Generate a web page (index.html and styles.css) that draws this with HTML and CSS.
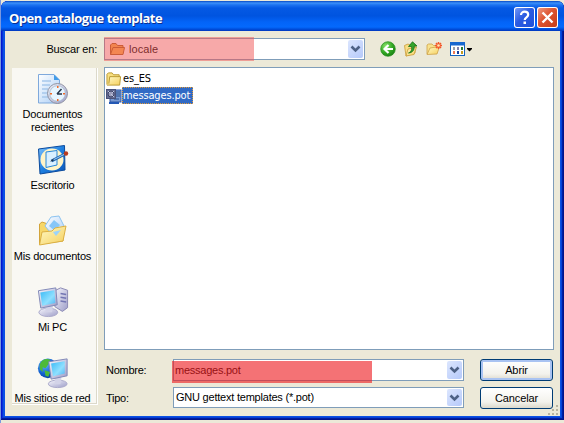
FILE: index.html
```html
<!DOCTYPE html>
<html lang="es">
<head>
<meta charset="utf-8">
<title>Open catalogue template</title>
<link rel="stylesheet" href="styles.css">
</head>
<body>
<svg class="defs" width="0" height="0">
  <defs>
    <linearGradient id="screen" x1="0" y1="0" x2="1" y2="1"><stop offset="0" stop-color="#39b9f5"/><stop offset=".6" stop-color="#8fe0ff"/><stop offset="1" stop-color="#4fb4f2"/></linearGradient>
    <linearGradient id="metal" x1="0" y1="0" x2="1" y2="1"><stop offset="0" stop-color="#f6f6fd"/><stop offset="1" stop-color="#9e9ec8"/></linearGradient>
    <linearGradient id="gold" x1="0" y1="0" x2="1" y2="1"><stop offset="0" stop-color="#fffac8"/><stop offset="1" stop-color="#f5cf5c"/></linearGradient>
    <linearGradient id="paper" x1="0" y1="0" x2="1" y2="1"><stop offset="0" stop-color="#ffffff"/><stop offset="1" stop-color="#a9cdf6"/></linearGradient>
    <linearGradient id="desk" x1="0" y1="0" x2="1" y2="1"><stop offset="0" stop-color="#7fc4ff"/><stop offset=".5" stop-color="#1e7fe0"/><stop offset="1" stop-color="#0c56b8"/></linearGradient>
    <radialGradient id="green" cx=".35" cy=".3" r=".8"><stop offset="0" stop-color="#8be36a"/><stop offset=".6" stop-color="#2fa421"/><stop offset="1" stop-color="#167a12"/></radialGradient>
    <radialGradient id="globe" cx=".35" cy=".3" r=".8"><stop offset="0" stop-color="#65b8ff"/><stop offset=".6" stop-color="#1260d0"/><stop offset="1" stop-color="#063a94"/></radialGradient>
  </defs>
</svg>
<div class="window">
  <header class="titlebar">
    <h1>Open catalogue template</h1>
    <button class="cap help" aria-label="Ayuda"><svg width="21" height="21"><path d="M7 8C7 3.500 14.200 3.800 14.200 7.800C14.200 10.300 10.700 10.300 10.700 13" fill="none" stroke="#fff" stroke-width="2.200"/><rect x="9.500" y="14.500" width="2.500" height="2.500" fill="#fff"/></svg></button>
    <button class="cap close" aria-label="Cerrar"><svg width="21" height="21"><path d="M5.500 5.500L15.500 15.500M15.500 5.500L5.500 15.500" stroke="#fff" stroke-width="2.400"/></svg></button>
  </header>
  <main class="body">
    <div class="toolbar">
      <label>Buscar en:</label>
      <div class="combo look">
        <svg class="folder" width="17" height="16" viewBox="0 0 17 16"><path d="M1.500 13.500V4L3 2.500H7L8.500 4.500H14V7" fill="#f2b44a" stroke="#a8651a"/><path d="M1.500 13.500L4 6.500H15.500L14 13.500Z" fill="#f7b850" stroke="#a8651a"/></svg>
        <span class="value">locale</span>
        <span class="drop"><svg width="15" height="18"><path d="M3.500 6.500L7.500 10.500L11.500 6.500" fill="none" stroke="#4d6185" stroke-width="2.600"/></svg></span>
        <i class="mark"></i>
      </div>
      <div class="tools">
        <svg width="16" height="16"><circle cx="8" cy="8" r="7.300" fill="url(#green)" stroke="#258d1d" stroke-width=".7"/><path d="M13 8H5M8.500 4L4.500 8L8.500 12" fill="none" stroke="#fff" stroke-width="2.200"/></svg>
        <svg width="16" height="16"><path d="M1.500 4.500L5 3L7 4L12 3V12L3 15Z" fill="#f9df85" stroke="#c99b38" stroke-width=".8"/><path d="M3 15L5 8L13.500 6L11 13.500Z" fill="url(#gold)" stroke="#c99b38" stroke-width=".8"/><path d="M5.500 12C8.800 10.500 9 8 8.500 5.500H5.500L9.500 .8L14 5H11.200C11.500 9 9.500 11.800 5.500 12Z" fill="#35a52c" stroke="#176f16" stroke-width=".8"/></svg>
        <svg width="16" height="16"><path d="M1 13V4L2.500 3H6L7.500 4.500H12V7" fill="#f8e28c" stroke="#cda147" stroke-width=".8"/><path d="M1 13.500L4 7L13.500 5.500L11 13Z" fill="url(#gold)" stroke="#cda147" stroke-width=".8"/><path d="M12.500 1V8M9 4.500H16M10 2L15 7M15 2L10 7" stroke="#f4572a" stroke-width="1.500"/><circle cx="12.500" cy="4.500" r="1.300" fill="#ffe7b0"/></svg>
        <svg width="24" height="16"><rect x=".5" y="1.500" width="14" height="13" fill="#fff" stroke="#1262bd"/><rect x="0" y="1" width="15" height="3.500" fill="#1768cf"/><g><path fill="#98a0a8" d="M3 6h2v3H3z"/><path fill="#8184ad" d="M7 6h2v3H7z"/><path fill="#267a35" d="M11 6h2v3h-2z"/><path fill="#f07a52" d="M3 10h2v3H3z"/><path fill="#173f9c" d="M7 10h2v3H7z"/><path fill="#c39b20" d="M11 10h2v3h-2z"/></g><path d="M17 7H22V8L19.500 10.500L17 8Z" fill="#000"/></svg>
      </div>
    </div>
    <nav class="places">
      <a><svg width="32" height="34" viewBox="0 0 32 34"><path d="M1.500 2.500H17L22.500 8V31H1.500Z" fill="url(#paper)" stroke="#7fa9dc"/><path d="M17 2.500V8H22.500Z" fill="#429ce8"/><path d="M5 9H14M5 13H13M5 17H11M5 21H11M5 25H12" stroke="#a7c7ec" stroke-width="1.500"/><circle cx="20.500" cy="21.500" r="10" fill="url(#metal)" stroke="#8e94a2"/><circle cx="20.500" cy="21.500" r="7.800" fill="#e7f5ff" stroke="#9fb4c6" stroke-width=".7"/><path d="M20 22L24.500 17M20 22H25" stroke="#27364a" stroke-width="1.500"/><path d="M20 14h1.500v2H20zM20 27h1.500v2H20zM13 21h2v1.500h-2zM26 21h2v1.500h-2z" fill="#f46a27"/></svg><span>Documentos<br>recientes</span></a>
      <a><svg width="32" height="34" viewBox="0 0 32 34"><path d="M1.500 6L27.500 2.500L28 27L3 31Z" fill="url(#desk)" stroke="#0b4b9d"/><ellipse cx="15" cy="16.500" rx="11.500" ry="11" fill="#fff4c7"/><path d="M9 9L20 7.500V22L9 24.500Z" fill="#d9f0ff" stroke="#2787d8"/><path d="M14.500 18L28 11" stroke="#2465ac" stroke-width="3"/><path d="M15 17.500L27 11.500" stroke="#9ad0ff"/><path d="M13 18.500L16.500 15.500V18Z" fill="#18324f"/><circle cx="29" cy="10.500" r="2.200" fill="#b83b20"/></svg><span>Escritorio</span></a>
      <a><svg width="32" height="34" viewBox="0 0 32 34"><path d="M2.500 30V10L5 8L11 10L26 14V27Z" fill="#f7d768" stroke="#d2a43a"/><path d="M8 12L14 3L22 2L27 12L18 24Z" fill="url(#paper)" stroke="#8cc3f0"/><path d="M12 12L17 6L23 11L18 17Z" fill="#86c6f8"/><path d="M2.500 31L5 18L15 17L18 14L29 12L26 27Z" fill="url(#gold)" stroke="#dbb043"/><path d="M16 18L24 16L19 22Z" fill="#9bd3fb"/></svg><span>Mis documentos</span></a>
      <a><svg width="32" height="34" viewBox="0 0 34 34"><path d="M19 5L25 2L32.500 4.500V23L27 27L19 22Z" fill="url(#metal)" stroke="#8886b2"/><path d="M25 8L31 9M25 12L31 13M25 16L31 17" stroke="#7376b3" stroke-width="1.500"/><ellipse cx="12" cy="28" rx="10" ry="4.500" fill="url(#metal)" stroke="#aaa9ca"/><path d="M9 21H17L16 28H9Z" fill="#d3d3e8"/><path d="M1.500 5L20 2L21.500 20L4 23.500Z" fill="url(#metal)" stroke="#7c83b4"/><path d="M3.500 7L18.500 4.500L19.500 18L5.500 21Z" fill="url(#screen)"/></svg><span>Mi PC</span></a>
      <a><svg width="32" height="34" viewBox="0 0 34 34"><circle cx="11.500" cy="12" r="10.500" fill="url(#globe)"/><path d="M3 8C5 2 11 1 14 3L12 8L9 12L6 11L6 16L3 13Z" fill="#4dba38"/><path d="M8 14L14 16L12 21L9 20Z" fill="#4dba38"/><ellipse cx="22" cy="28.500" rx="10" ry="4" fill="url(#metal)" stroke="#aaa9ca"/><path d="M19 21H26L25 29H19Z" fill="#d3d3e8"/><path d="M12.500 5L32 2V20L15 23.500Z" fill="url(#metal)" stroke="#7c83b4"/><path d="M15 7L29.500 4.500V17.500L17 20.500Z" fill="url(#screen)"/></svg><span>Mis sitios de red</span></a>
    </nav>
    <section class="files">
      <div class="file"><svg width="16" height="16" viewBox="0 0 17 16"><path d="M1 14V3L2.500 1.500H6.500L8 3.500H14V6" fill="#f8df80" stroke="#b8962e"/><path d="M1 14.500H14.500L15.500 5.500H4L3 13" fill="url(#gold)" stroke="#b8962e"/></svg><span>es_ES</span></div>
      <div class="file selected"><svg width="16" height="16"><rect x="4" y="2" width="11" height="12" fill="#7999d0" stroke="#2c55a5"/><path d="M9 4H14M10 6H14M10 8H14M8 11H13" stroke="#29508e"/><path d="M3 15H13" stroke="#2458b4" stroke-width="2"/><rect x=".5" y="1.500" width="9" height="9" fill="#666d92" stroke="#4a5278"/><circle cx="5" cy="6" r="3" fill="#9a9dbb" stroke="#3b4267"/><path d="M2 3L4 5M8 3L6 5M5 6L8 9" stroke="#bec6df"/></svg><span>messages.pot</span></div>
    </section>
    <section class="fields">
      <label>Nombre:</label>
      <div class="combo name"><span class="value">messages.pot</span><span class="drop"><svg width="15" height="18"><path d="M3.500 6.500L7.500 10.500L11.500 6.500" fill="none" stroke="#4d6185" stroke-width="2.600"/></svg></span><i class="mark"></i></div>
      <button class="push primary">Abrir</button>
      <label>Tipo:</label>
      <div class="combo type"><span class="value">GNU gettext templates (*.pot)</span><span class="drop"><svg width="15" height="17"><path d="M3.500 6.500L7.500 10.500L11.500 6.500" fill="none" stroke="#4d6185" stroke-width="2.600"/></svg></span></div>
      <button class="push">Cancelar</button>
    </section>
    <svg class="grip" width="12" height="12"><path d="M9 1h2v2H9zM5 5h2v2H5zM9 5h2v2H9zM1 9h2v2H1zM5 9h2v2H5zM9 9h2v2H9z" fill="#b8b4a0"/></svg>
  </main>
</div>
</body>
</html>
```

FILE: styles.css
```css
* { box-sizing: border-box; }
body {
  margin: 0;
  width: 564px;
  height: 423px;
  overflow: hidden;
  padding: 1px 0 0 1px;
  background: linear-gradient(90deg, #7b98df 1px, #ece9d8 1px);
  font: 11px/13px "Liberation Sans", Arial, sans-serif;
  letter-spacing: -.1px;
  color: #000;
}
.defs { display: block; height: 0; }
svg { display: block; flex: none; }
button { padding: 0; margin: 0; border: 0; font: inherit; letter-spacing: inherit; color: inherit; }
.window {
  width: 563px;
  height: 419px;
  padding: 0 4px 4px;
  border-radius: 7px 7px 0 0;
  background: #0a50e4;
  box-shadow: inset -1px -1px #00138c, inset 1px 0 #0019cf, inset -2px -2px #001ea0, inset 2px 0 #0831d9, inset -3px -3px #0441d8;
}
.titlebar {
  height: 30px;
  margin: 0 -4px;
  padding: 6px 6px 0 8px;
  display: flex;
  gap: 2px;
  border-radius: 7px 7px 0 0;
  background: linear-gradient(#0648c4 0, #3c91fa 2px, #1c72f0 4px, #0559e4 7px, #0054e0 15px, #0364f8 21px, #0469fd 26px, #0050de 28px, #0036bd 30px);
}
.titlebar h1 {
  margin: 0 auto 0 0;
  font: 700 13px/22px "Open Sans", sans-serif;
  letter-spacing: -.5px;
  white-space: nowrap;
  color: #fff;
  text-shadow: 1px 1px #0a2f90;
}
.cap { width: 21px; height: 21px; border-radius: 3px; box-shadow: inset 0 0 0 1px #fff; }
.help { background: linear-gradient(135deg, #7aa0fa, #2b5ce2 45%, #1c50d8); }
.close { background: linear-gradient(135deg, #f0a08a, #dd5430 45%, #c23a16); }
.body {
  position: relative;
  height: 385px;
  display: grid;
  grid-template: 36px 283px 66px / 92px 450px;
  grid-template-areas: "bar bar" "places files" "places fields";
  column-gap: 7px;
  background: #ece9d8;
}
.toolbar { grid-area: bar; display: flex; padding: 7px 0 0; }
.toolbar label { width: 99px; padding: 5px 7px 0 0; text-align: right; letter-spacing: -.2px; }
.combo {
  position: relative;
  display: flex;
  align-items: center;
  height: 22px;
  border: 1px solid #7f9db9;
  background: #fff;
  padding: 0 1px 0 2px;
}
.combo .value { flex: 1; white-space: nowrap; }
.drop { width: 15px; height: 18px; border-radius: 2px; background: linear-gradient(135deg, #dce6fe, #b5c9fa); }
.look { width: 261px; padding-left: 4px; }
.look .value { padding-left: 3px; letter-spacing: .1px; }
.mark { position: absolute; background: rgba(240, 84, 84, .5); }
.look .mark { left: -1px; top: -2px; width: 150px; height: 24px; }
.name .value { margin-left: -1px; letter-spacing: -.25px; }
.name .mark { left: -2px; top: 1px; width: 200px; height: 22px; background: rgba(237, 28, 32, .62); }
.type .value { letter-spacing: -.22px; }
.tools { display: flex; gap: 8px; padding: 3px 0 0 15px; }
.tools svg:nth-child(2), .tools svg:nth-child(3) { margin-right: -1px; }
.tools svg:nth-child(2), .tools svg:nth-child(3) { position: relative; left: -1px; }
.places {
  grid-area: places;
  width: 86px;
  height: 337px;
  margin: 1px 0 0 7px;
  padding: 4px 4px 0 0;
  background: #f9f8f3;
  border: solid #fff;
  border-width: 0 1px 1px 0;
  box-shadow: inset -1px -1px #dcd9ca;
}
.places a { display: flex; flex-direction: column; align-items: center; height: 71px; white-space: nowrap; text-align: center; letter-spacing: -.2px; }
.places a span { margin-top: 2px; }
.files { grid-area: files; height: 283px; border: 1px solid #7f9db9; background: #fff; padding: 2px 1px; }
.file { display: flex; height: 17px; align-items: center; font: 11px/15px "DejaVu Sans Condensed", "DejaVu Sans", sans-serif; letter-spacing: -.15px; }
.file span { padding: 0 1px; }
.selected span { width: 71px; height: 17px; line-height: 17px; background: #316ac5; color: #fff; outline: 1px dotted #e09a3a; outline-offset: -1px; }
.fields {
  grid-area: fields;
  display: grid;
  grid-template-columns: 67px 291px 73px;
  grid-template-rows: 22px 21px;
  row-gap: 6px;
  padding: 9px 0 0 2px;
}
.fields label { padding-top: 5px; letter-spacing: -.25px; }
.name { height: 22px; }
.type { height: 21px; }
.type .drop { height: 17px; }
.push {
  width: 73px;
  height: 22px;
  margin-left: 16px;
  border: 1px solid #003c74;
  border-radius: 3px;
  background: linear-gradient(#fff, #f3f2ec 70%, #dcd8cb);
}
.primary { box-shadow: inset 0 0 0 2px #a9c3f2; }
.grip { position: absolute; right: 1px; bottom: 0; }
```
